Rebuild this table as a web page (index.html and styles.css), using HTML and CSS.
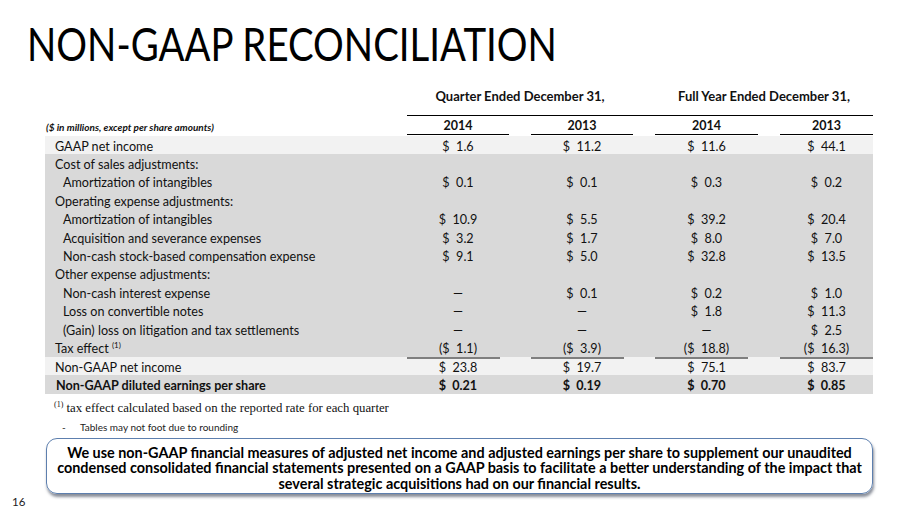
FILE: index.html
```html
<!DOCTYPE html>
<html>
<head>
<meta charset="utf-8">
<link rel="stylesheet" href="styles.css">
</head>
<body>
<div class="slide">
  <h1 class="title">NON-GAAP RECONCILIATION</h1>
  <div class="recon">
    <div class="group">
      <div></div>
      <div class="grp q">Quarter Ended December 31,</div>
      <div class="grp fy">Full Year Ended December 31,</div>
    </div>
    <div class="grow years">
      <div class="units">($ in millions, except per share amounts)</div>
      <div class="yr">2014</div>
      <div class="yr">2013</div>
      <div class="yr">2014</div>
      <div class="yr">2013</div>
    </div>
    <div class="grow row light"><div class="lbl">GAAP net income</div><div class="v">$&nbsp; 1.6</div><div class="v">$&nbsp; 11.2</div><div class="v">$&nbsp; 11.6</div><div class="v">$&nbsp; 44.1</div></div>
    <div class="grow row"><div class="lbl">Cost of sales adjustments:</div><div></div><div></div><div></div><div></div></div>
    <div class="grow row"><div class="lbl ind">Amortization of intangibles</div><div class="v">$&nbsp; 0.1</div><div class="v">$&nbsp; 0.1</div><div class="v">$&nbsp; 0.3</div><div class="v">$&nbsp; 0.2</div></div>
    <div class="grow row"><div class="lbl">Operating expense adjustments:</div><div></div><div></div><div></div><div></div></div>
    <div class="grow row"><div class="lbl ind">Amortization of intangibles</div><div class="v">$&nbsp; 10.9</div><div class="v">$&nbsp; 5.5</div><div class="v">$&nbsp; 39.2</div><div class="v">$&nbsp; 20.4</div></div>
    <div class="grow row"><div class="lbl ind">Acquisition and severance expenses</div><div class="v">$&nbsp; 3.2</div><div class="v">$&nbsp; 1.7</div><div class="v">$&nbsp; 8.0</div><div class="v">$&nbsp; 7.0</div></div>
    <div class="grow row"><div class="lbl ind">Non-cash stock-based compensation expense</div><div class="v">$&nbsp; 9.1</div><div class="v">$&nbsp; 5.0</div><div class="v">$&nbsp; 32.8</div><div class="v">$&nbsp; 13.5</div></div>
    <div class="grow row"><div class="lbl">Other expense adjustments:</div><div></div><div></div><div></div><div></div></div>
    <div class="grow row"><div class="lbl ind">Non-cash interest expense</div><div class="v">—</div><div class="v">$&nbsp; 0.1</div><div class="v">$&nbsp; 0.2</div><div class="v">$&nbsp; 1.0</div></div>
    <div class="grow row"><div class="lbl ind">Loss on convertible notes</div><div class="v">—</div><div class="v">—</div><div class="v">$&nbsp; 1.8</div><div class="v">$&nbsp; 11.3</div></div>
    <div class="grow row"><div class="lbl ind">(Gain) loss on litigation and tax settlements</div><div class="v">—</div><div class="v">—</div><div class="v">—</div><div class="v">$&nbsp; 2.5</div></div>
    <div class="grow row"><div class="lbl">Tax effect <sup class="sup">(1)</sup></div><div class="v ul">($&nbsp; 1.1)</div><div class="v ul">($&nbsp; 3.9)</div><div class="v ul">($&nbsp; 18.8)</div><div class="v ul">($&nbsp; 16.3)</div></div>
    <div class="grow row light"><div class="lbl">Non-GAAP net income</div><div class="v">$&nbsp; 23.8</div><div class="v">$&nbsp; 19.7</div><div class="v">$&nbsp; 75.1</div><div class="v">$&nbsp; 83.7</div></div>
    <div class="grow row bold"><div class="lbl eps">Non-GAAP diluted earnings per share</div><div class="v">$&nbsp; 0.21</div><div class="v">$&nbsp; 0.19</div><div class="v">$&nbsp; 0.70</div><div class="v">$&nbsp; 0.85</div></div>
  </div>
  <p class="note"><sup>(1)</sup> tax effect calculated based on the reported rate for each quarter</p>
  <p class="note2"><span class="dash">-</span>Tables may not foot due to rounding</p>
  <div class="footer">
    <div class="pnum">16</div>
    <div class="callout"><div class="cl">We use non-GAAP financial measures of adjusted net income and adjusted earnings per share to supplement our unaudited</div><div class="cl">condensed consolidated financial statements presented on a GAAP basis to facilitate a better understanding of the impact that</div><div class="cl">several strategic acquisitions had on our financial results<span class="big">.</span></div></div>
  </div>
</div>
</body>
</html>
```
FILE: styles.css
```css
* { box-sizing: border-box; }
html, body { margin: 0; padding: 0; }
body {
  width: 911px;
  height: 512px;
  overflow: hidden;
  background: #fff;
  font-family: Lato, "Open Sans", sans-serif;
  color: #111;
}
.slide { padding-top: 16px; }
.title {
  margin: 0 0 0 27px;
  height: 68px;
  font-weight: 400;
  font-size: 46px;
  line-height: 56px;
  color: #000;
  white-space: nowrap;
  transform: scaleX(0.835);
  transform-origin: left center;
}
.recon { margin-left: 45px; width: 828px; }
.grow {
  display: grid;
  grid-template-columns: 340px 102px 102px 103px 93px;
  column-gap: 22px;
  align-items: center;
}
.group {
  display: grid;
  grid-template-columns: 362px 248px 218px;
  height: 32px;
}
.grp {
  font-weight: 700;
  font-size: 13px;
  text-align: center;
  border-bottom: 1px solid #000;
  height: 32px;
  padding-top: 4px;
}
.grp.q { padding-right: 22px; }
.years { height: 18px; margin-bottom: 1px; margin-top: 1px; }
.units {
  font-size: 10px;
  font-weight: 700;
  font-style: italic;
  padding-left: 1px;
  padding-top: 2px;
  white-space: nowrap;
}
.yr {
  height: 18px;
  line-height: 17px;
  text-align: center;
  font-weight: 700;
  font-size: 12.5px;
  border-bottom: 1px solid #000;
}
.row {
  height: 18.43px;
  background: #d9d9d9;
  font-size: 12.6px;
  align-items: stretch;
}
.row > div { line-height: 18.43px; padding-top: 1.5px; height: 100%; }
.row.light { background: #f2f2f2; }
.row.bold { font-weight: 700; }
.lbl { padding-left: 10px; white-space: nowrap; }
.lbl.ind { padding-left: 18px; }
.lbl.eps { padding-left: 11px; }
.v { text-align: center; white-space: nowrap; }
.ul {
  background: linear-gradient(#7f7f7f, #7f7f7f) left bottom / 93px 2px no-repeat;
}
.sup { font-size: 8px; vertical-align: 5px; line-height: 0; }
.note {
  margin: 6px 0 0 54px;
  font-family: "Liberation Serif", serif;
  font-size: 12.8px;
  line-height: 16px;
  color: #111;
}
.note sup { font-size: 8px; vertical-align: 5px; line-height: 0; }
.note2 {
  margin: 4px 0 0 62px;
  font-size: 10px;
  line-height: 14px;
  color: #222;
}
.dash { display: inline-block; width: 18px; }
.footer { display: flex; align-items: flex-end; margin-top: 4px; }
.pnum { width: 46px; padding-left: 12px; font-size: 11.5px; line-height: 14px; margin-bottom: -15px; color: #222; }
.callout {
  width: 827px;
  height: 56px;
  border: 1.5px solid #5d7fae;
  border-radius: 11px;
  box-shadow: 1px 3px 3px rgba(40, 50, 70, 0.55);
  text-align: center;
  font-weight: 700;
  font-size: 14.4px;
  padding-top: 6px;
  white-space: nowrap;
  color: #000;
}
.cl { height: 15.5px; line-height: 15.5px; }
.big { font-weight: 900; }
```
